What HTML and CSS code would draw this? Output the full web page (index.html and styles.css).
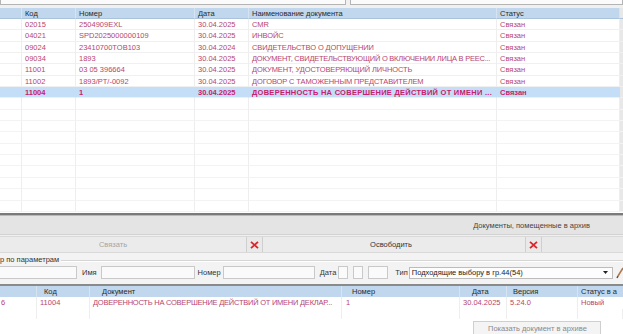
FILE: index.html
```html
<!DOCTYPE html>
<html lang="ru">
<head>
<meta charset="utf-8">
<title>Документы</title>
<link rel="stylesheet" href="styles.css">
</head>
<body>
<div class="app">
  <div class="top-inputs">
    <div class="tbox tbox-a"></div>
    <div class="tbox tbox-b"></div>
  </div>

  <div class="grid-top">
    <div class="row row-head">
      <div class="c"></div><div class="c">Код</div><div class="c">Номер</div><div class="c">Дата</div><div class="c">Наименование документа</div><div class="c">Статус</div><div class="c"></div>
    </div>
    <div class="row">
      <div class="c"></div><div class="c">02015</div><div class="c">2504909EXL</div><div class="c">30.04.2025</div><div class="c up">CMR</div><div class="c">Связан</div><div class="c"></div>
    </div>
    <div class="row">
      <div class="c"></div><div class="c">04021</div><div class="c">SPD2025000000109</div><div class="c">30.04.2025</div><div class="c up">ИНВОЙС</div><div class="c">Связан</div><div class="c"></div>
    </div>
    <div class="row">
      <div class="c"></div><div class="c">09024</div><div class="c">23410700TOB103</div><div class="c">30.04.2024</div><div class="c up">СВИДЕТЕЛЬСТВО О ДОПУЩЕНИИ</div><div class="c">Связан</div><div class="c"></div>
    </div>
    <div class="row">
      <div class="c"></div><div class="c">09034</div><div class="c">1893</div><div class="c">30.04.2025</div><div class="c up up-tight">ДОКУМЕНТ, СВИДЕТЕЛЬСТВУЮЩИЙ О ВКЛЮЧЕНИИ ЛИЦА В РЕЕС...</div><div class="c">Связан</div><div class="c"></div>
    </div>
    <div class="row">
      <div class="c"></div><div class="c">11001</div><div class="c">03 05 396664</div><div class="c">30.04.2025</div><div class="c up">ДОКУМЕНТ, УДОСТОВЕРЯЮЩИЙ ЛИЧНОСТЬ</div><div class="c">Связан</div><div class="c"></div>
    </div>
    <div class="row">
      <div class="c"></div><div class="c">11002</div><div class="c">1893/PT/-0092</div><div class="c">30.04.2025</div><div class="c up">ДОГОВОР С ТАМОЖЕННЫМ ПРЕДСТАВИТЕЛЕМ</div><div class="c">Связан</div><div class="c"></div>
    </div>
    <div class="row row-sel">
      <div class="c"></div><div class="c">11004</div><div class="c">1</div><div class="c">30.04.2025</div><div class="c up-bold">ДОВЕРЕННОСТЬ НА СОВЕРШЕНИЕ ДЕЙСТВИЙ ОТ ИМЕНИ ...</div><div class="c">Связан</div><div class="c"></div>
    </div>
    <div class="row row-empty"><div class="c"></div><div class="c"></div><div class="c"></div><div class="c"></div><div class="c"></div><div class="c"></div><div class="c"></div></div>
    <div class="row row-empty"><div class="c"></div><div class="c"></div><div class="c"></div><div class="c"></div><div class="c"></div><div class="c"></div><div class="c"></div></div>
    <div class="row row-empty"><div class="c"></div><div class="c"></div><div class="c"></div><div class="c"></div><div class="c"></div><div class="c"></div><div class="c"></div></div>
    <div class="row row-empty"><div class="c"></div><div class="c"></div><div class="c"></div><div class="c"></div><div class="c"></div><div class="c"></div><div class="c"></div></div>
    <div class="row row-empty"><div class="c"></div><div class="c"></div><div class="c"></div><div class="c"></div><div class="c"></div><div class="c"></div><div class="c"></div></div>
    <div class="row row-empty"><div class="c"></div><div class="c"></div><div class="c"></div><div class="c"></div><div class="c"></div><div class="c"></div><div class="c"></div></div>
    <div class="row row-empty"><div class="c"></div><div class="c"></div><div class="c"></div><div class="c"></div><div class="c"></div><div class="c"></div><div class="c"></div></div>
    <div class="row row-empty"><div class="c"></div><div class="c"></div><div class="c"></div><div class="c"></div><div class="c"></div><div class="c"></div><div class="c"></div></div>
    <div class="row row-empty"><div class="c"></div><div class="c"></div><div class="c"></div><div class="c"></div><div class="c"></div><div class="c"></div><div class="c"></div></div>
    <div class="row row-empty"><div class="c"></div><div class="c"></div><div class="c"></div><div class="c"></div><div class="c"></div><div class="c"></div><div class="c"></div></div>
  </div>

  <div class="splitter"></div>
  <div class="archive-bar"><span>Документы, помещенные в архив</span></div>

  <div class="btn-row">
    <div class="btn btn-link disabled">Связать</div>
    <div class="xcell"><svg width="9" height="8" viewBox="0 0 9 8"><path d="M1 0.8 L8 7.2 M8 0.8 L1 7.2" stroke="#d8262a" stroke-width="1.8" fill="none"/></svg></div>
    <div class="btn btn-free">Освободить</div>
    <div class="xcell"><svg width="9" height="8" viewBox="0 0 9 8"><path d="M1 0.8 L8 7.2 M8 0.8 L1 7.2" stroke="#d8262a" stroke-width="1.8" fill="none"/></svg></div>
    <div class="btn-rest"></div>
  </div>

  <div class="filter">
    <div class="legend"><span>р по параметрам</span><div class="legend-line"></div></div>
    <div class="filter-row">
      <div class="inp inp-first"></div>
      <span class="lbl lbl-name">Имя</span>
      <div class="inp inp-name"></div>
      <span class="lbl lbl-num">Номер</span>
      <div class="inp inp-num"></div>
      <span class="lbl lbl-date">Дата</span>
      <div class="inp inp-d1"></div>
      <div class="inp inp-d2"></div>
      <div class="inp inp-d3"></div>
      <span class="lbl lbl-type">Тип</span>
      <div class="select">
        <span>Подходящие выбору в гр.44(54)</span>
        <svg class="arrow" width="5" height="3" viewBox="0 0 5 3"><path d="M0 0 H5 L2.5 3 Z" fill="#222"/></svg>
      </div>
      <svg class="tool" width="8" height="13" viewBox="0 0 8 13"><path d="M7 2 L2 10" stroke="#b07a50" stroke-width="1.6" fill="none"/><path d="M2 10 L1 12" stroke="#6a4a30" stroke-width="1.6" fill="none"/></svg>
    </div>
  </div>

  <div class="grid-bot">
    <div class="brow brow-head">
      <div class="c"></div><div class="c c-kod">Код</div><div class="c c-doc">Документ</div><div class="c c-num">Номер</div><div class="c c-date">Дата</div><div class="c c-ver">Версия</div><div class="c c-st">Статус в а</div>
    </div>
    <div class="brow">
      <div class="c c-first">6</div><div class="c">11004</div><div class="c up up-tight">ДОВЕРЕННОСТЬ НА СОВЕРШЕНИЕ ДЕЙСТВИЙ ОТ ИМЕНИ ДЕКЛАР...</div><div class="c c-n1">1</div><div class="c">30.04.2025</div><div class="c">5.24.0</div><div class="c c-st">Новый</div>
    </div>
    <div class="brow brow-empty"><div class="c"></div><div class="c"></div><div class="c"></div><div class="c"></div><div class="c"></div><div class="c"></div><div class="c"></div></div>
  </div>

  <div class="footer">
    <div class="show-btn">Показать документ в архиве</div>
  </div>
</div>
</body>
</html>
```

FILE: styles.css
```css
html, body {
  margin: 0;
  padding: 0;
}
body {
  width: 623px;
  height: 334px;
  overflow: hidden;
  background: #f0f0f0;
  font-family: "Liberation Sans", Arial, sans-serif;
  font-size: 7.5px;
  color: #333;
}
.app {
  display: flex;
  flex-direction: column;
  width: 623px;
  height: 334px;
}

/* top input stubs */
.top-inputs {
  display: flex;
  gap: 4px;
  height: 5px;
  margin-bottom: 3px;
}
.tbox {
  height: 4px;
  background: #fbfbfb;
  border: 1px solid #b4b4b4;
  border-top: none;
}
.tbox-a { width: 344px; }
.tbox-b { flex: 1; }

/* top grid */
.grid-top {
  background: #fff;
  height: 205px;
  overflow: hidden;
}
.row {
  display: grid;
  grid-template-columns: 22px 54px 119px 54px 248px 123px 3px;
  height: 11.35px;
  line-height: 11px;
}
.row .c {
  border-right: 1px solid #eeeeee;
  border-bottom: 1px solid #f0f0f0;
  padding-left: 3px;
  white-space: nowrap;
  overflow: hidden;
  color: #b84470;
}
.row .up { letter-spacing: -0.12px; }
.row .up-tight, .brow .up-tight { letter-spacing: -0.24px; }
.row .up-bold { letter-spacing: 0.26px; }
.row-head {
  background: #c0d7ed;
  height: 11px;
}
.row-head .c {
  color: #2a2a2a;
  border-right: 1px solid #d6e4f2;
  border-bottom: 1px solid #a9c3dc;
}
.row-sel {
  background: #c3def6;
}
.row-sel .c {
  color: #c8206c;
  font-weight: bold;
  border-right-color: #c3def6;
}
.row .c:last-child {
  background: #e8e8e8;
  border-right: none;
  padding: 0;
}
.row-empty .c {
  border-bottom-color: #f3f3f3;
}

/* splitter + archive bar */
.splitter {
  height: 2px;
  background: #7a7a7a;
  border-bottom: 1px solid #b9b9b9;
}
.archive-bar {
  height: 18px;
  background: #e4e4e4;
  display: flex;
  align-items: center;
  justify-content: flex-end;
  padding-right: 33px;
  color: #444;
  border-bottom: 1px solid #d2d2d2;
}

/* buttons row */
.btn-row {
  display: flex;
  height: 15px;
  margin-top: 1px;
  background: #e6e6e6;
  border-top: 1px solid #d9d9d9;
  border-bottom: 1px solid #d9d9d9;
}
.btn {
  display: flex;
  align-items: center;
  justify-content: center;
  background: #ebebeb;
  border-right: 1px solid #cfcfcf;
  color: #333;
}
.btn.disabled { color: #a5a5a5; }
.btn-link {
  width: 247px;
  padding-right: 20px;
  box-sizing: border-box;
}
.btn-free {
  width: 263px;
  padding-right: 6px;
  box-sizing: border-box;
}
.xcell {
  width: 15px;
  display: flex;
  align-items: center;
  justify-content: center;
  background: #e9e9e9;
  border-right: 1px solid #cfcfcf;
}
.btn-rest {
  flex: 1;
  background: #e9e9e9;
}

/* filter group */
.filter {
  background: #f3f3f3;
  padding-bottom: 5px;
}
.legend {
  display: flex;
  align-items: center;
  height: 11px;
  margin-top: 1px;
  color: #333;
}
.legend span {
  white-space: nowrap;
  padding-right: 2px;
}
.legend-line {
  flex: 1;
  height: 0;
  border-top: 1px solid #d5d5d5;
  border-bottom: 1px solid #ffffff;
  margin-top: 2px;
}
.filter-row {
  display: flex;
  align-items: center;
  height: 13px;
  margin-top: 1px;
}
.inp {
  height: 11px;
  background: #fafafa;
  border: 1px solid #c9c9c9;
  flex: none;
}
.inp-first { width: 76px; border-left: none; }
.inp-name { width: 92px; }
.inp-num { width: 90px; }
.inp-d1 { width: 8px; }
.inp-d2 { width: 8px; margin-left: 5px; }
.inp-d3 { width: 18px; margin-left: 5px; }
.lbl {
  flex: none;
  white-space: nowrap;
  color: #333;
}
.lbl-name { margin: 0 4px 0 5px; }
.lbl-num { margin: 0 2px 0 3px; }
.lbl-date { margin: 0 2px 0 5px; }
.lbl-type { margin: 0 1px 0 7px; }
.select {
  flex: none;
  width: 204px;
  height: 12px;
  background: #fdfdfd;
  border: 1px solid #bcbcbc;
  display: flex;
  align-items: center;
  justify-content: space-between;
  padding: 0 4px 0 2px;
  box-sizing: border-box;
  color: #222;
  white-space: nowrap;
}
.arrow { flex: none; }
.tool { flex: none; margin-left: 3px; }

/* bottom grid */
.grid-bot {
  background: #fff;
  border-top: 2px solid #8a8a8a;
  height: 33px;
  overflow: hidden;
}
.brow {
  display: grid;
  grid-template-columns: 37px 53px 252px 118px 47px 71px 45px;
  height: 12px;
  line-height: 12px;
}
.brow .c {
  white-space: nowrap;
  overflow: hidden;
  padding-left: 3px;
  border-right: 1px solid #eeeeee;
  color: #b84470;
}
.brow-head {
  background: #c0d7ed;
  height: 11px;
  line-height: 11px;
}
.brow-head .c {
  color: #2a2a2a;
  border-right: 1px solid #d6e4f2;
}
.brow-head .c-kod { padding-left: 7px; }
.brow-head .c-doc { padding-left: 12px; }
.brow-head .c-num { padding-left: 10px; }
.brow-head .c-date { padding-left: 12px; }
.brow-head .c-ver { padding-left: 6px; }
.brow .c-st { padding-left: 3px; border-right: none; }
.brow .c-first { padding-left: 1px; }
.brow .c-n1 { padding-left: 4px; }
.brow-empty { height: 10px; }

/* footer */
.footer {
  flex: 1;
  background: #fff;
  display: flex;
  justify-content: flex-end;
  align-items: flex-end;
  padding-right: 22px;
}
.show-btn {
  width: 128px;
  height: 13px;
  box-sizing: border-box;
  border: 1px solid #cfcfcf;
  border-bottom: none;
  background: #f4f4f4;
  color: #8a8a8a;
  padding-left: 14px;
  line-height: 14px;
}
```
